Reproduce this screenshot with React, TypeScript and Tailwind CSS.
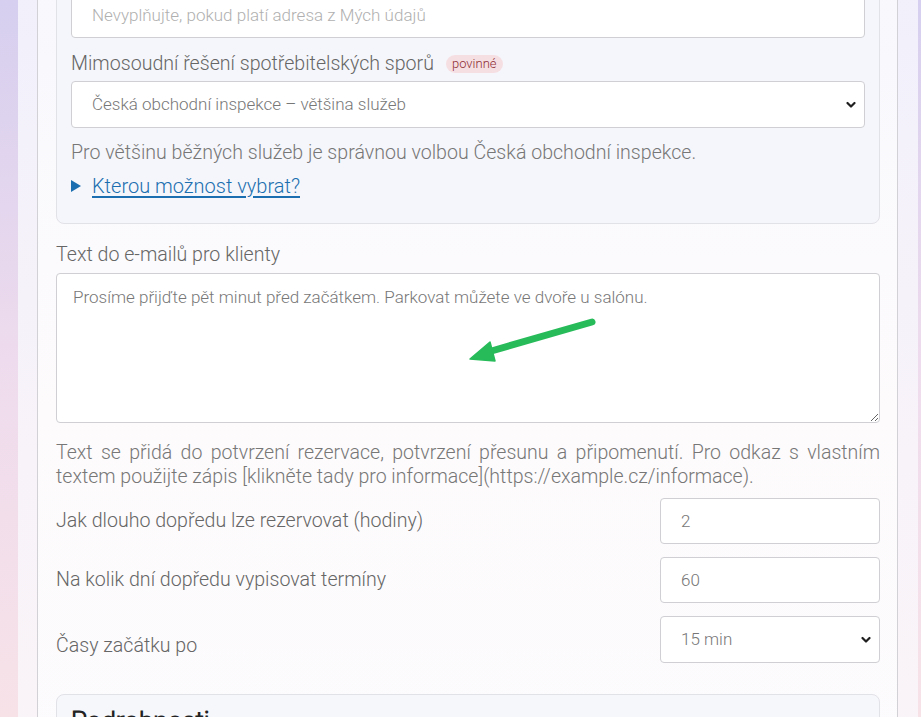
import React from "react";

const font = { fontFamily: "'Roboto Light', 'Roboto', 'Noto Sans', sans-serif" };

function Chevron() {
  return (
    <svg
      className="pointer-events-none absolute right-[9px] top-1/2 -translate-y-1/2"
      width="10"
      height="7"
      viewBox="0 0 10 7"
    >
      <path d="M1.5 1.5 L5 5 L8.5 1.5" fill="none" stroke="#1f1f1f" strokeWidth="2.2" strokeLinecap="round" strokeLinejoin="round" />
    </svg>
  );
}

export default function App() {
  return (
    <div
      className="h-[717px] overflow-hidden bg-gradient-to-b from-[#d6cfef] via-[#eedbed] to-[#f7e2e8] pl-[18px] pr-[3px]"
      style={font}
    >
      <div className="bg-gradient-to-b from-[#f1f0fb] via-[#f8f3f9] to-[#fbf5f7] pb-[100px] pl-[19px] pr-[20px]">
        <div className="border-x border-[#d2d2d6] bg-gradient-to-b from-[#f8f8fd] via-[#fdfbfc] to-[#fcfbfd] pb-[100px] pl-[18px] pr-[17px] font-light">
          {/* top card */}
          <div className="-mt-[25px] rounded-lg border border-[#e1e1e8] bg-[#f5f6fb] px-[14px] pb-[24px] pt-[15px]">
            <input
              readOnly
              placeholder="Nevyplňujte, pokud platí adresa z Mých údajů"
              className="block h-[47px] w-full rounded border border-[#cfcfd4] bg-white px-5 text-[17px] font-light text-[#777] placeholder:text-[#b0b0b0] outline-none"
            />
            <div className="mt-[13px] flex items-center gap-3 text-[19.6px] leading-[25px] text-[#666]">
              <span>Mimosoudní řešení spotřebitelských sporů</span>
              <span className="rounded-full bg-[#f6dfe3] px-[6px] py-[1px] text-[13px] font-normal leading-[16px] text-[#8e2f35]">
                povinné
              </span>
            </div>
            <div className="relative mt-[5px]">
              <select
                className="block h-[47px] w-full appearance-none rounded border border-[#cfcfd4] bg-white px-5 text-[17px] font-light text-[#777] outline-none"
                defaultValue="coi"
              >
                <option value="coi">Česká obchodní inspekce – většina služeb</option>
              </select>
              <Chevron />
            </div>
            <p className="mt-[12px] text-[19.6px] leading-[26px] text-[#777]">
              Pro většinu běžných služeb je správnou volbou Česká obchodní inspekce.
            </p>
            <div className="mt-[7px] flex items-center gap-[11px] text-[20px] font-normal leading-[26px] text-[#1b6fb0]">
              <svg width="10" height="12" viewBox="0 0 10 12">
                <path d="M0 0 L10 6 L0 12 Z" fill="#1b6fb0" />
              </svg>
              <span className="underline decoration-[1.5px] underline-offset-[3px]">Kterou možnost vybrat?</span>
            </div>
          </div>

          {/* textarea field */}
          <div className="mt-[18px] text-[19.6px] leading-[26px] text-[#666]">Text do e-mailů pro klienty</div>
          <div className="relative mt-[5px]">
            <textarea
              readOnly
              defaultValue="Prosíme přijďte pět minut před začátkem. Parkovat můžete ve dvoře u salónu."
              className="block h-[150px] w-full rounded border border-[#cfcfd4] bg-white px-4 py-[11px] text-[17px] font-light leading-[24px] text-[#777] outline-none"
            />
            <svg
              className="pointer-events-none absolute left-[405px] top-[40px]"
              width="140"
              height="60"
              viewBox="405 40 140 60"
            >
              <line x1="536" y1="49" x2="432" y2="79" stroke="#27bb5a" strokeWidth="7" strokeLinecap="round" />
              <path d="M414 86 L434 69 L439 88 Z" fill="#27bb5a" stroke="#27bb5a" strokeWidth="1.5" strokeLinejoin="round" />
            </svg>
          </div>
          <p className="mt-[18px] text-justify text-[19.55px] leading-[24px] text-[#777]">
            Text se přidá do potvrzení rezervace, potvrzení přesunu a připomenutí. Pro odkaz s vlastním textem použijte
            zápis [klikněte tady pro informace](https://example.cz/informace).
          </p>

          {/* rows */}
          <div className="mt-[9px] flex items-center justify-between">
            <span className="text-[19.6px] leading-[26px] text-[#666]">Jak dlouho dopředu lze rezervovat (hodiny)</span>
            <input
              readOnly
              defaultValue="2"
              className="h-[46px] w-[220px] rounded border border-[#cfcfd4] bg-white px-5 text-[17px] font-light text-[#777] outline-none"
            />
          </div>
          <div className="mt-[13px] flex items-center justify-between">
            <span className="text-[19.6px] leading-[26px] text-[#666]">Na kolik dní dopředu vypisovat termíny</span>
            <input
              readOnly
              defaultValue="60"
              className="h-[46px] w-[220px] rounded border border-[#cfcfd4] bg-white px-5 text-[17px] font-light text-[#777] outline-none"
            />
          </div>
          <div className="mt-[13px] flex items-center justify-between">
            <span className="pt-[12px] text-[19.6px] leading-[26px] text-[#666]">Časy začátku po</span>
            <div className="relative w-[220px]">
              <select
                defaultValue="15"
                className="block h-[47px] w-full appearance-none rounded border border-[#cfcfd4] bg-white px-5 text-[17px] font-light text-[#777] outline-none"
              >
                <option value="15">15 min</option>
              </select>
              <Chevron />
            </div>
          </div>

          {/* bottom card */}
          <div className="mt-[31px] rounded-lg border border-[#e1e1e8] bg-[#f6f7fb] px-[14px] pt-[10px]">
            <h2 className="text-[26px] font-bold leading-[32px] text-[#222]">Podrobnosti</h2>
          </div>
        </div>
      </div>
    </div>
  );
}
